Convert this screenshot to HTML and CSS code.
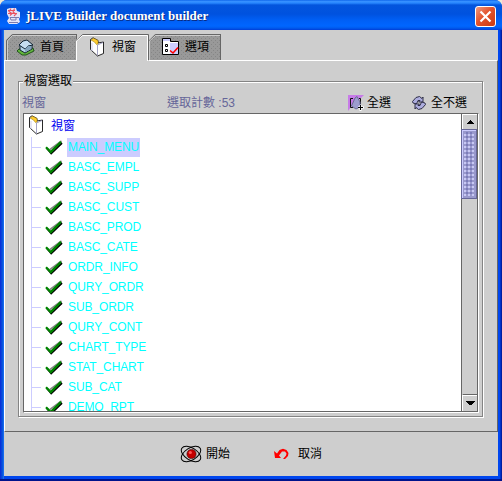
FILE: index.html
```html
<!DOCTYPE html>
<html lang="zh-Hant">
<head>
<meta charset="utf-8">
<title>jLIVE Builder document builder</title>
<link rel="stylesheet" href="styles.css">
</head>
<body>
<svg class="defs" width="0" height="0">
  <defs>
    <pattern id="bumps" width="4" height="4" patternUnits="userSpaceOnUse"><path d="M0 0h1v1H0zM2 2h1v1H2z" fill="#868686"/></pattern>
    <symbol id="folder" viewBox="0 0 16 20">
      <path d="M1.500 2.500L4 .8l5 2.700V6l5.500-1v11.500l-6 2.500-7-6.500z" fill="#fff" stroke="#111" stroke-width=".9"/>
      <path d="M8.500 18.500V8L14 5.500" fill="none" stroke="#8c8cb5" stroke-width=".8"/>
      <path d="M3 6v8" stroke="#ceceef"/>
      <path d="M2 3l2.500-1.800L9 3.500V7L7.500 7.500 5.500 5z" fill="#ffce31" stroke="#8c6b00" stroke-width=".5"/>
    </symbol>
    <symbol id="check" viewBox="0 0 18 15">
      <path d="M2 8.500l4.200 5L17 3" fill="none" stroke="#000" stroke-width="1.800"/>
      <path d="M5 9.500L16.500 1" fill="none" stroke="#888" stroke-width="1.600"/>
      <path d="M1 7.200l4.800 4.900L16 1.700" fill="none" stroke="#008400" stroke-width="2.300"/>
    </symbol>
  </defs>
</svg>
<div class="window">
  <header class="titlebar">
    <svg class="java" width="16" height="16" viewBox="0 0 16 16">
      <path d="M1 1l3-1h6l1 3 3 1v5l-1 2 1 3-3 2H3l-2-3 2-3-2-4z" fill="#e4e4f8"/>
      <path d="M2 2.500h7M2 5.500h9M5 .5l-2 3 3 2-2 2M8.500.5L7 4l3 2-2 2" fill="none" stroke="#e9505e" stroke-width="1.100"/>
      <path d="M4 9.500h6v2.500H5zM10 9.500h3M3 14.500h9" fill="none" stroke="#7b7bad"/>
    </svg>
    <h1>jLIVE Builder document builder</h1>
    <button class="close" aria-label="Close"><svg width="19" height="19" viewBox="0 0 19 19"><path d="M4.500 4.500l10 10M14.500 4.500l-10 10" stroke="#fff" stroke-width="2.200"/></svg></button>
  </header>
  <main>
    <nav class="tabs">
      <div class="tab first">
        <svg class="shape" width="71" height="26"><path d="M0 26V6l6-6h65v26z" fill="#999"/><path d="M0 26V6l6-6h65v26z" fill="url(#bumps)"/><path d="M.5 26V6.500l6-6H70" fill="none" stroke="#666"/><path d="M1.500 26V7l5-5.500H70" fill="none" stroke="#ccc"/><path d="M70.500 0v26" stroke="#666"/></svg>
        <svg class="ico" width="18" height="17" viewBox="0 0 18 17"><path d="M2 10l-2 2 5 4h4l8-4-1-3z" fill="#63b53c" stroke="#21521c"/><path d="M3 6v5l5 3 7-4V5L9 8z" fill="#b5d3e7" stroke="#142634"/><path d="M2 6l4-4 4-1 6 5-5 1-3 3z" fill="#c6def0" stroke="#142634"/><path d="M8 10v3l6-3V7l-3 0z" fill="#84a5bd"/></svg>
        <span>首頁</span>
      </div>
      <div class="tab active">
        <svg class="shape" width="73" height="27"><path d="M0 27V6l6-6h67v27z" fill="#cecece"/><path d="M.5 6.500l6-6H72.500V26" fill="none" stroke="#666"/><path d="M.5 27V7l6-5.500H71.500V27" fill="none" stroke="#fff"/></svg>
        <svg class="ico" width="16" height="20"><use href="#folder"/></svg>
        <span>視窗</span>
      </div>
      <div class="tab last">
        <svg class="shape" width="72" height="26"><path d="M0 26V6l6-6h66v26z" fill="#999"/><path d="M0 26V6l6-6h66v26z" fill="url(#bumps)"/><path d="M.5 6.500l6-6H72" fill="none" stroke="#666"/><path d="M.5 26V7l6-5.500H71" fill="none" stroke="#ccc"/><path d="M71.500 0v26" stroke="#666"/></svg>
        <svg class="ico" width="19" height="18" viewBox="0 0 19 18"><path d="M1.500.5h8v3h8v13h-16z" fill="#fff" stroke="#000"/><path d="M9 5h8v11H9z" fill="#ceceff"/><path d="M4.500 6.500h2v2h-2zM4.500 11.500h2v2h-2z" fill="#fff" stroke="#000"/><path d="M2 1h7v2H2z" fill="#ceceff"/><path d="M9 12.500l3 2.500 5-5.500" fill="none" stroke="red" stroke-width="1.600"/></svg>
        <span>選項</span>
      </div>
    </nav>
    <section class="pane">
      <div class="group">
        <h2>視窗選取</h2>
        <div class="tools">
          <span class="heading">視窗</span>
          <span class="count">選取計數 :53</span>
          <button class="all"><svg width="16" height="16" viewBox="0 0 16 16"><path d="M0 0h16l-4 4-9 8-3 4z" fill="#c77be8"/><path d="M5 3.500H2.500v9H5M11 3.500h1.500V9" fill="none" stroke="#111"/><path d="M3.500 11L7 3l2-1.500L12 7v5l-4 2z" fill="#9c9cce" stroke="#6b6b94"/><path d="M12.500 10v6M10 12.500h6" stroke="#fff" stroke-width="2"/><path d="M12.500 10v5M10 12.500h5" stroke="#000"/></svg><span>全選</span></button>
          <button class="none"><svg width="14" height="14" viewBox="0 0 14 14"><g fill="#adadde" stroke="#21213a" stroke-width=".9"><path d="M.5 5.500L4 1.500 7.500.5 10 2.500 11 1v5H6.500L8 4.500H6L4.500 8 1 7z"/><path d="M13.500 8.500l-3.500 4-3.500 1L4 11.500 3 13V8h4.500L6 9.500h2L9.500 6l3.500 1z"/></g></svg><span>全不選</span></button>
        </div>
        <div class="list">
          <div class="tree">
            <div class="root"><svg width="16" height="20"><use href="#folder"/></svg><span>視窗</span></div>
            <ul>
              <li class="selected"><svg><use href="#check"/></svg><span>MAIN_MENU</span></li>
              <li><svg><use href="#check"/></svg><span>BASC_EMPL</span></li>
              <li><svg><use href="#check"/></svg><span>BASC_SUPP</span></li>
              <li><svg><use href="#check"/></svg><span>BASC_CUST</span></li>
              <li><svg><use href="#check"/></svg><span>BASC_PROD</span></li>
              <li><svg><use href="#check"/></svg><span>BASC_CATE</span></li>
              <li><svg><use href="#check"/></svg><span>ORDR_INFO</span></li>
              <li><svg><use href="#check"/></svg><span>QURY_ORDR</span></li>
              <li><svg><use href="#check"/></svg><span>SUB_ORDR</span></li>
              <li><svg><use href="#check"/></svg><span>QURY_CONT</span></li>
              <li><svg><use href="#check"/></svg><span>CHART_TYPE</span></li>
              <li><svg><use href="#check"/></svg><span>STAT_CHART</span></li>
              <li><svg><use href="#check"/></svg><span>SUB_CAT</span></li>
              <li><svg><use href="#check"/></svg><span>DEMO_RPT</span></li>
            </ul>
          </div>
          <div class="scrollbar">
            <div class="arrow up"><svg width="9" height="4" shape-rendering="crispEdges"><path d="M4 0h1v1h1v1h1v1h1v1H1V3h1V2h1V1h1z"/></svg></div>
            <div class="thumb"></div>
            <div class="arrow down"><svg width="9" height="4" shape-rendering="crispEdges"><path d="M0 0h9v1H8v1H7v1H6v1H3V3H2V2H1V1H0z"/></svg></div>
          </div>
        </div>
      </div>
    </section>
    <footer>
      <button class="start"><svg width="22" height="18" viewBox="0 0 22 18"><g fill="none" stroke="#000"><ellipse cx="11" cy="9" rx="10.800" ry="6" transform="rotate(32 11 9)"/><ellipse cx="11" cy="9" rx="10.800" ry="6" transform="rotate(-32 11 9)"/></g><circle cx="11.500" cy="9" r="4.600" fill="#c40000" stroke="#300" stroke-width=".6"/><circle cx="10.300" cy="7.500" r="1.600" fill="#ff5252"/></svg><span>開始</span></button>
      <button class="cancel"><svg width="15" height="12" viewBox="0 0 15 12"><path d="M0 3l1 7h6L5 7.500 8 3.500h3l1.500 2-.5 2-3 3.500h2l3-3 .5-3L12.500 2 9 .8 5.500 2 3 5.500z" fill="#f00"/></svg><span>取消</span></button>
    </footer>
  </main>
</div>
</body>
</html>
```
FILE: styles.css
```css
* { box-sizing: border-box; }
body { margin: 0; font: 12px/16px "Liberation Sans", "Noto Sans CJK TC", sans-serif; color: #000; background: #ece9d8; }
button { display: flex; align-items: center; padding: 0; border: 0; background: none; font: inherit; color: inherit; }
svg { display: block; flex: none; }
.defs { position: absolute; }
.window { width: 502px; height: 481px; display: flex; flex-direction: column; padding: 0 4px 3px; background: linear-gradient(90deg, #0831d9 0 1px, #0855dd 2px 3px, #166aee 3px 4px, #0046ee 4px 498px, #0046ee 498px 500px, #001ea0 501px); border-radius: 7px 7px 0 0; overflow: hidden; border-bottom: 2px solid #00138c; }
.titlebar { height: 30px; flex: none; margin: 0 -4px; padding: 2px 6px 0 6px; display: flex; align-items: center; background: linear-gradient(#0058e6 0, #3a93ff 1px, #2888ff 3px, #0355dd 5px, #0052df 14px, #005ff5 20px, #0066ff 26px, #005bee 28px, #003dd7 30px); }
.titlebar h1 { margin: 0 auto 0 4px; font: bold 13px/16px "Liberation Serif", serif; letter-spacing: -.02px; color: #fff; text-shadow: 1px 1px #0a2a80; }
.close { width: 21px; height: 21px; border: 1px solid #fff; border-radius: 3px; background: linear-gradient(135deg, #ee9a80, #e3532d 45%, #c93a10); }
main { flex: 1; min-height: 0; display: flex; flex-direction: column; background: #cecece; }
.tabs { height: 30px; flex: none; display: flex; padding: 4px 0 0 2px; }
.tab { position: relative; display: flex; align-items: center; height: 26px; }
.tab .shape { position: absolute; left: 0; top: 0; }
.tab .ico, .tab span { position: relative; }
.first { width: 70px; padding-left: 11px; gap: 5px; }
.active { width: 73px; padding-left: 13px; gap: 7px; z-index: 1; }
.active .shape { height: 27px; }
.last { width: 72px; padding-left: 12px; gap: 5px; }
.pane { height: 372px; flex: none; padding: 20px 14px 14px 13px; border: 1px solid; border-color: #fff #666 #666 #fff; }
.group { height: 336px; border: 1px solid #848484; box-shadow: inset 1px 1px #fff, 1px 1px #fff; padding: 0 4px 4px; }
.group h2 { width: max-content; height: 16px; margin: -9px 0 0 0; padding: 0 1px; background: #cecece; font-size: 12px; font-weight: 400; line-height: 16px; }
.tools { height: 24px; display: flex; align-items: center; padding-top: 3px; }
.heading, .count { color: #666699; }
.heading { width: 145px; margin-left: -1px; }
.count { width: 181px; }
.all { width: 64px; gap: 3px; }
.none { gap: 5px; }
.list { width: 456px; height: 300px; display: flex; border: 1px solid #666; border-right-color: #fff; border-bottom-color: #fff; background: #fff; }
.tree { flex: 1; overflow: hidden; padding-top: 1px; border-bottom: 1px solid #666; }
.root { height: 22px; display: flex; align-items: flex-start; line-height: 22px; padding-left: 4px; gap: 7px; color: #0000f0; }
ul { margin: 0 0 0 7px; padding: 0; list-style: none; border-left: 1px solid #ccf; }
li { height: 20px; display: flex; align-items: center; color: #0ff; letter-spacing: -.1px; }
li::before { content: ""; width: 9px; height: 1px; background: #ccf; }
li svg { width: 18px; height: 15px; margin: 0 4px 0 4px; }
li span { height: 19px; line-height: 19px; padding: 0 1px; }
.selected span { background: #ccf; }
.scrollbar { width: 17px; display: flex; flex-direction: column; background: #cecece; border: solid #666; border-width: 0 1px 1px; }
.arrow { height: 15px; display: flex; align-items: center; justify-content: center; border-top: 1px solid #fff; border-left: 1px solid #fff; }
.thumb { height: 70px; margin: 0 0 0 -1px; border: 1px solid #669; background: conic-gradient(#c8c8f5 25%, #9999cc 0 50%, #7c7cbb 0 75%, #9999cc 0) 0 0 / 4px 4px; box-shadow: inset 1px 1px #ccf, inset 0 0 0 2px #99c; }
.down { margin-top: auto; height: 17px; border-top: 1px solid #666; box-shadow: inset 0 1px #fff; }
footer { flex: 1; display: flex; align-items: center; padding-left: 176px; }
.start { width: 94px; gap: 4px; }
.cancel { gap: 9px; }
```
